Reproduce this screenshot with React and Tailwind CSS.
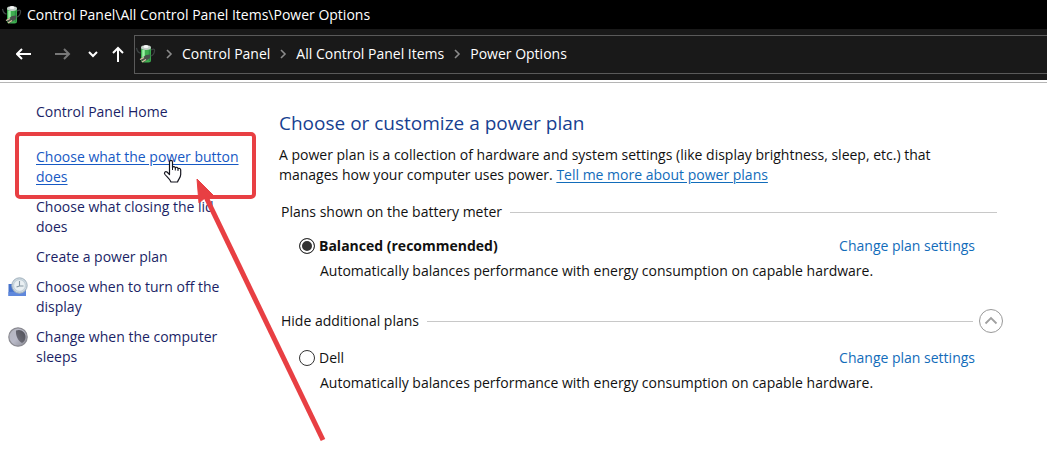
import { useState } from "react";

function BatteryIcon() {
  return (
    <svg className="h-5 w-5 shrink-0" viewBox="0 0 20 20" aria-hidden="true">
      <path d="M0.500 4q1 5 4 5M15 6q4-2 3.500 1-0.500 4-3.500 5" fill="none" stroke="#3c4242" strokeWidth="1.3" />
      <rect x="5" y="2" width="10" height="16.500" rx="2.5" fill="#3fae50" />
      <path d="M7.500 6v10" stroke="#9cf0a4" strokeWidth="2.5" />
      <path d="M13.5 6v11" stroke="#2a8f42" strokeWidth="1.5" />
      <ellipse cx="10" cy="3.600" rx="5" ry="2.400" fill="#c3cdc8" />
      <ellipse cx="10" cy="2.400" rx="2.6" ry="1.5" fill="#f5f8f6" />
      <path d="M4 15.500l6-4.500 4.500-0.500-0.500 3.500-6 4z" fill="#47504a" />
      <path d="M4 15.500l4-2M6 18l4-2.500" stroke="#d9c8a4" strokeWidth="1.3" />
    </svg>
  );
}

function ClockIcon() {
  return (
    <svg className="h-5 w-5" viewBox="0 0 20 20" aria-hidden="true">
      <path d="M0.500 7H18v12H0.500z" fill="#4673cc" />
      <path d="M0.500 15l17.500-1v5H0.500z" fill="#5f88dc" />
      <circle cx="11.500" cy="8.500" r="7.700" fill="#cdd9e1" stroke="#a3b2bd" strokeWidth="1" />
      <circle cx="11.500" cy="8.500" r="5.800" fill="#eaf0f3" stroke="#bccad3" strokeWidth="0.8" />
      <path d="M11.500 4v5h4M11.500 9L8.500 10" fill="none" stroke="#8697a4" strokeWidth="1.1" />
    </svg>
  );
}

function MoonIcon() {
  return (
    <svg className="h-5 w-5" viewBox="0 0 20 20" aria-hidden="true">
      <defs>
        <linearGradient id="moon" x1="0" y1="0" x2="1" y2="1">
          <stop offset="0" stopColor="#b4b5be" />
          <stop offset="0.5" stopColor="#b9bac8" />
          <stop offset="1" stopColor="#8a8a94" />
        </linearGradient>
        <linearGradient id="shade" x1="1" y1="0" x2="0" y2="1">
          <stop offset="0" stopColor="#4f4f58" />
          <stop offset="1" stopColor="#74747f" />
        </linearGradient>
      </defs>
      <circle cx="10" cy="10" r="9.2" fill="url(#moon)" stroke="#8b8b92" strokeWidth="1.2" />
      <path d="M8 3.500C13 1.500 17.500 5 17.500 10c0 3-1.500 5-3.500 6C9.500 13.500 7.500 8 8 3.500z" fill="url(#shade)" />
    </svg>
  );
}

function Chevron() {
  return (
    <svg className="h-3 w-2 shrink-0" viewBox="0 0 8 12" fill="none" stroke="#8b8b8b" strokeWidth="1.6" aria-hidden="true">
      <path d="M2 2l4 4-4 4" />
    </svg>
  );
}

function NavButton({ label, className, children }) {
  return (
    <button type="button" aria-label={label} className={className}>
      <svg className="h-4 w-4" viewBox="0 0 16 16" fill="none" stroke="currentColor" strokeWidth="2" aria-hidden="true">
        {children}
      </svg>
    </button>
  );
}

function HandCursor() {
  return (
    <svg className="absolute left-[127px] top-3 h-6 w-5" viewBox="0 0 20 24" aria-hidden="true">
      <path
        d="M6.500 14V3.200C6.500 0.700 9.500 0.700 9.500 3.200V8.500C10 7 12.300 7.300 12.300 9C13 7.800 15 8.100 15 9.800C16 9 17.700 9.500 17.700 11V15.500C17.700 18.500 15.500 20 14.500 23H8C7 20 4 18 2 15.500C0.500 13.500 2.500 12 4 13L6.500 15.500Z"
        fill="#fff"
        stroke="#15151f"
        strokeWidth="1.2"
        strokeLinejoin="round"
      />
      <path d="M9.500 8v3M12.300 9v2.500M15 10v2" stroke="#15151f" strokeWidth="1" />
    </svg>
  );
}

const tasks = [
  { text: "Choose what the power button does", active: true },
  { text: "Choose what closing the lid does" },
  { text: "Create a power plan" },
  { text: "Choose when to turn off the display", icon: <ClockIcon /> },
  { text: "Change when the computer sleeps", icon: <MoonIcon /> },
];

function Sidebar() {
  return (
    <nav aria-label="Tasks" className="w-64 shrink-0 pl-2 pt-[19px] text-[#1b1f66]">
      <a href="#home" className="ml-7 block">Control Panel Home</a>
      <ul className="mt-[25px] flex flex-col gap-[10px]">
        {tasks.map((task) => (
          <li key={task.text} className="relative grid grid-cols-[20px_1fr] gap-2">
            <span>{task.icon}</span>
            <a href="#task" className={task.active ? "pr-2 text-[#1759c4] underline underline-offset-2" : "pr-5"}>
              {task.text}
            </a>
            {task.active && (
              <>
                <span className="pointer-events-none absolute -bottom-3 -top-[15px] left-[7px] right-0 rounded-[5px] border-4 border-[#e83f43]" />
                <span className="pointer-events-none absolute left-7 top-0">
                  <HandCursor />
                </span>
                <svg className="pointer-events-none absolute left-[184px] top-[30px] z-10 h-[266px] w-[136px]" viewBox="0 0 136 266" aria-hidden="true">
                  <path d="M13 18L131 263" stroke="#e83f43" strokeWidth="5" />
                  <path d="M5 2L7 26L14 20L22 19Z" fill="#e83f43" stroke="#e83f43" strokeLinejoin="round" />
                </svg>
              </>
            )}
          </li>
        ))}
      </ul>
    </nav>
  );
}

function Plan({ id, name, bold, checked, onSelect }) {
  return (
    <div className="pl-5 pr-[28px]">
      <div className="flex items-center justify-between">
        <div className="flex items-center gap-1">
          <input
            id={id}
            type="radio"
            name="plan"
            checked={checked}
            onChange={onSelect}
            className="h-4 w-4 appearance-none rounded-full border border-[#333] bg-white checked:bg-[#333] checked:shadow-[inset_0_0_0_2px_white]"
          />
          <label htmlFor={id} className={bold ? "font-bold" : ""}>{name}</label>
        </div>
        <a href="#settings" className="text-[#126cba]">Change plan settings</a>
      </div>
      <p className="mt-[5px] pl-[21px]">Automatically balances performance with energy consumption on capable hardware.</p>
    </div>
  );
}

export default function App() {
  const [plan, setPlan] = useState("balanced");
  const [open, setOpen] = useState(true);
  return (
    <div className="min-h-screen bg-white font-['Open_Sans','Noto_Sans',sans-serif] text-sm leading-5 text-[#111]">
      <header className="text-white">
        <div className="flex h-[29px] items-center gap-[5px] bg-black pl-[2px]">
          <BatteryIcon />
          <h1>Control Panel\All Control Panel Items\Power Options</h1>
        </div>
        <div className="flex h-[51px] items-center bg-[#191919] pb-px pl-4">
          <NavButton label="Back">
            <path d="M15 8H1M6 3L1 8l5 5" />
          </NavButton>
          <NavButton label="Forward" className="ml-[23px] text-[#777]">
            <path d="M0 8h14M9 3l5 5-5 5" />
          </NavButton>
          <NavButton label="Recent locations" className="ml-[14px]">
            <path d="M4 6l4 4 4-4" />
          </NavButton>
          <NavButton label="Up" className="ml-[9px]">
            <path d="M8 16V2M3 7l5-5 5 5" />
          </NavButton>
          <nav aria-label="Address" className="ml-2 flex h-[39px] flex-1 items-center border border-r-0 border-[#5a5a5a] pl-px">
            <BatteryIcon />
            <ol className="flex items-center">
              {["Control Panel", "All Control Panel Items", "Power Options"].map((item) => (
                <li key={item} className="flex items-center gap-[9px] pl-[9px]">
                  <Chevron />
                  <a href="#path">{item}</a>
                </li>
              ))}
            </ol>
          </nav>
        </div>
      </header>
      <div className="mt-[2px] border-t border-[#b5b5b5]">
        <div className="flex">
          <Sidebar />
          <main className="min-w-0 flex-1 pl-[23px] pr-11 pt-[26px]">
            <h2 className="text-[19px] leading-7 text-[#173f91]">Choose or customize a power plan</h2>
            <p className="mt-2 max-w-[680px]">
              A power plan is a collection of hardware and system settings (like display brightness, sleep, etc.) that
              manages how your computer uses power.{" "}
              <a href="#more" className="text-[#126cba] underline underline-offset-2">Tell me more about power plans</a>
            </p>
            <section className="mt-[17px]">
              <div className="flex items-center gap-2 pl-[2px] pr-[6px]">
                <h3>Plans shown on the battery meter</h3>
                <span className="h-px flex-1 bg-[#c8c8c8]" />
              </div>
              <div className="mt-[14px]">
                <Plan id="balanced" name="Balanced (recommended)" bold checked={plan === "balanced"} onSelect={() => setPlan("balanced")} />
              </div>
            </section>
            <section className="mt-7">
              <div className="flex items-center gap-[6px] pl-[2px]">
                <h3>Hide additional plans</h3>
                <span className="ml-[2px] h-px flex-1 bg-[#c8c8c8]" />
                <button
                  type="button"
                  aria-label="Toggle additional plans"
                  aria-expanded={open}
                  onClick={() => setOpen(!open)}
                  className="flex h-6 w-6 items-center justify-center rounded-full border border-[#999]"
                >
                  <svg className="h-4 w-4" viewBox="0 0 16 16" fill="none" stroke="#a0a0a0" strokeWidth="1.800" aria-hidden="true">
                    <path d="M2.500 10.500l5.500-5.500 5.500 5.500" />
                  </svg>
                </button>
              </div>
              {open && (
                <div className="mt-[15px]">
                  <Plan id="dell" name="Dell" checked={plan === "dell"} onSelect={() => setPlan("dell")} />
                </div>
              )}
            </section>
          </main>
        </div>
      </div>
    </div>
  );
}
